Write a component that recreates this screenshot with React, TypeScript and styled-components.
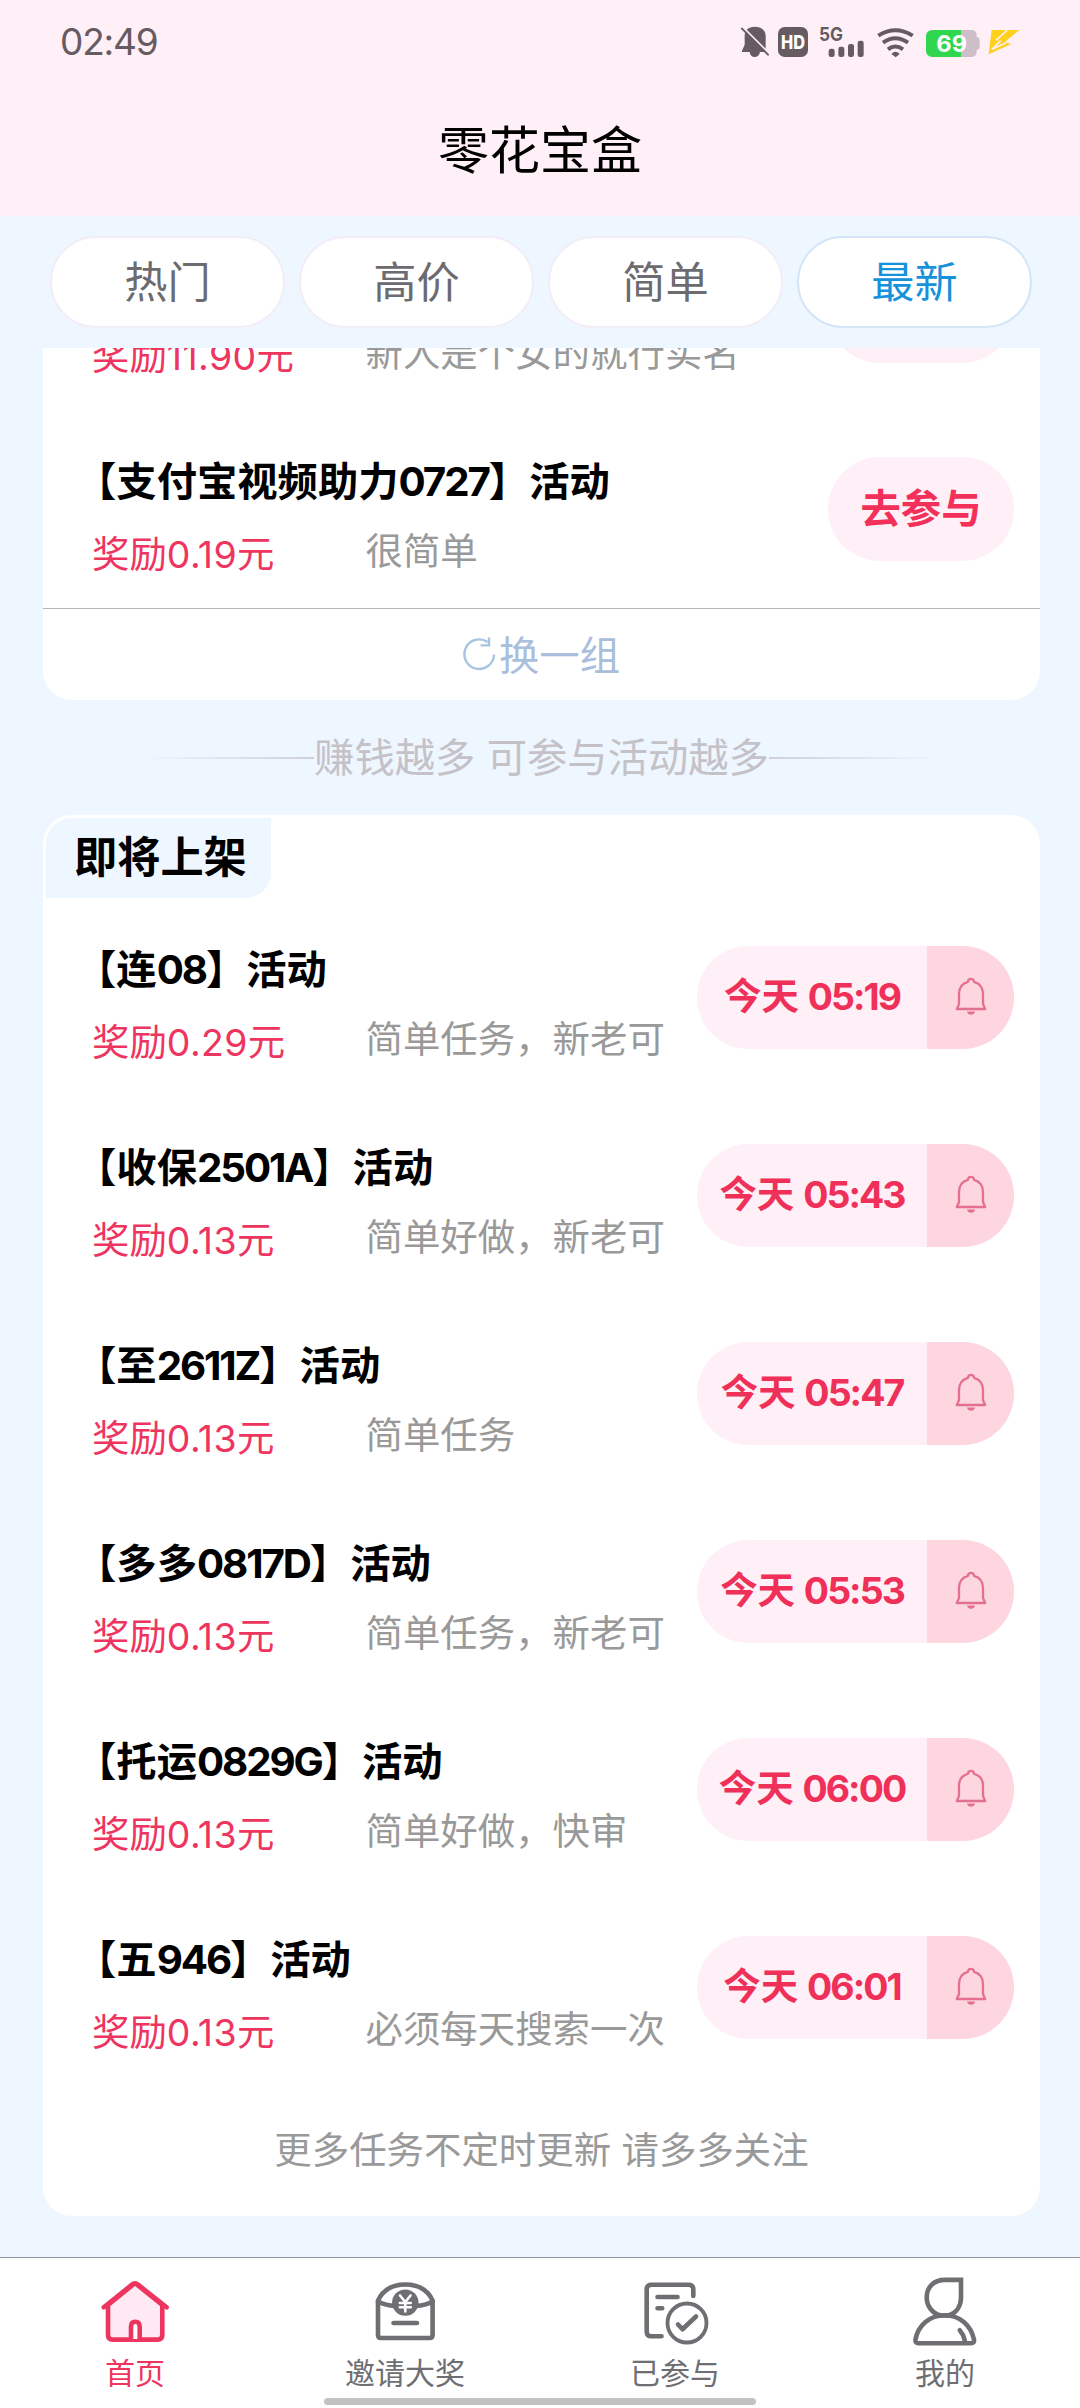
import React from "react";
import styled, { createGlobalStyle } from "styled-components";

const GlobalStyle = createGlobalStyle`
  * { box-sizing: border-box; }
  body {
    margin: 0;
    background: #eef6ff;
    font-family: Inter, "Noto Sans CJK SC", sans-serif;
  }
`;

const Screen = styled.div`
  width: 1080px;
  height: 2408px;
  display: flex;
  flex-direction: column;
  overflow: hidden;
  background: #eef6ff;
`;

const Header = styled.header`
  height: 216px;
  background: #ffeff6;
`;

const StatusBar = styled.div`
  height: 84px;
  padding: 0 60px 0 60px;
  display: flex;
  align-items: center;
  justify-content: space-between;
`;

const Clock = styled.span`
  font-size: 37px;
  line-height: 44px;
  letter-spacing: -1.2px;
  color: #665b61;
`;

const StatusIcons = styled.div`
  display: flex;
  align-items: center;
`;

const StatusIcon = styled.svg<{ $w: number; $gap?: number }>`
  display: block;
  width: ${(p) => p.$w}px;
  height: 32px;
  margin-left: ${(p) => p.$gap ?? 0}px;
  overflow: visible;
`;

const PageTitle = styled.h1`
  margin: 0;
  height: 132px;
  line-height: 134px;
  text-align: center;
  font-size: 51px;
  font-weight: 400;
  color: #000;
`;

const Tabs = styled.nav`
  height: 132px;
  padding: 20px 48px 0 50px;
  display: flex;
  gap: 14px;
`;

const Tab = styled.button<{ $active?: boolean }>`
  flex: 1;
  height: 92px;
  padding: 0 0 6px;
  border: 2px solid ${(p) => (p.$active ? "#d5e5f8" : "#f3edf7")};
  border-radius: 46px;
  background: #fff;
  font: 400 43.2px/70px "Noto Sans CJK SC", sans-serif;
  color: ${(p) => (p.$active ? "#1691dc" : "#6b6b70")};
`;

const Scroller = styled.main`
  height: 1909px;
  overflow: hidden;
  padding: 0 40px 0 43px;
`;

const ScrolledCard = styled.section`
  margin-top: -136px;
  height: 488px;
  background: #fff;
  border-radius: 0 0 29px 29px;
`;

const Refresh = styled.button`
  width: 100%;
  height: 92px;
  padding: 0 0 4px;
  border: 0;
  border-top: 1px solid #b3b7b9;
  background: transparent;
  display: flex;
  align-items: center;
  justify-content: center;
  gap: 3px;
  font: 400 40.32px/60px "Noto Sans CJK SC", sans-serif;
  color: #a9bedb;
`;

const Slogan = styled.div`
  height: 115px;
  display: flex;
  align-items: center;
  justify-content: center;
  font-size: 40.32px;
  line-height: 60px;
  color: #c4c1c7;
`;

const Fade = styled.i<{ $to: "left" | "right" }>`
  width: 170px;
  height: 2px;
  background: linear-gradient(to ${(p) => p.$to}, #cfd0d8, rgba(207, 208, 216, 0));
`;

const UpcomingCard = styled.section`
  height: 1401px;
  background: #fff;
  border: 3px solid #fff;
  border-bottom: 0;
  border-radius: 29px;
`;

const CardTag = styled.h2`
  margin: 0;
  width: 225px;
  height: 80px;
  padding-left: 28px;
  border-radius: 26px 0 26px 0;
  background: #eef6ff;
  font: 700 43.2px/72px "Noto Sans CJK SC", sans-serif;
  color: #000;
`;

const Row = styled.article<{ $inset?: number }>`
  height: 198px;
  padding: 0 ${(p) => 26 - (p.$inset ?? 0)}px 0 ${(p) => 33 - (p.$inset ?? 0)}px;
  display: flex;
  justify-content: space-between;
  align-items: center;
`;

const Info = styled.div`
  height: 198px;
  padding-top: 46px;
  white-space: nowrap;
`;

const Name = styled.h3`
  margin: 0;
  height: 52px;
  font-size: 40.32px;
  line-height: 52px;
  font-weight: 700;
  color: #000;
`;

const Meta = styled.div`
  margin-top: 21px;
  padding-left: 16px;
  display: flex;
  font-size: 37.44px;
  line-height: 52px;
`;

const Reward = styled.span`
  width: 273.5px;
  color: #ee3560;
`;

const Note = styled.span`
  margin-top: -3px;
  color: #999;
`;

const Digits = styled.span<{ $spacing: number }>`
  letter-spacing: ${(p) => p.$spacing}em;
`;

const JoinButton = styled.button`
  width: 186px;
  height: 104px;
  padding: 0 0 7px;
  border: 0;
  border-radius: 52px;
  background: #ffeff6;
  font: 700 40.32px/60px "Noto Sans CJK SC", sans-serif;
  color: #f2305a;
`;

const RemindButton = styled.button`
  width: 317px;
  height: 103px;
  padding: 0;
  border: 0;
  border-radius: 52px;
  overflow: hidden;
  display: flex;
  background: #ffeff6;
  font-family: inherit;
`;

const Time = styled.span`
  flex: 1;
  text-align: center;
  font-size: 37.44px;
  line-height: 101px;
  font-weight: 700;
  color: #ef3059;
`;

const BellBox = styled.span`
  width: 87px;
  height: 103px;
  display: flex;
  align-items: center;
  justify-content: center;
  background: #fdd6df;
`;

const MoreHint = styled.p`
  margin: 0;
  height: 130px;
  text-align: center;
  font-size: 37.44px;
  line-height: 130px;
  color: #999;
`;

const BottomNav = styled.footer`
  height: 151px;
  border-top: 1px solid #92969b;
  background: #fff;
  display: flex;
  flex-direction: column;
  align-items: center;
`;

const NavItems = styled.div`
  width: 100%;
  height: 140px;
  padding-top: 17px;
  display: flex;
`;

const NavItem = styled.div<{ $active?: boolean }>`
  flex: 1;
  display: flex;
  flex-direction: column;
  align-items: center;
  font: 400 30px/44px "Noto Sans CJK SC", sans-serif;
  color: ${(p) => (p.$active ? "#ee3560" : "#6e6e73")};
`;

const NavIcon = styled.svg`
  display: block;
  width: 72px;
  height: 72px;
  margin-bottom: 2px;
  fill: none;
  stroke: currentColor;
  stroke-width: 4.6;
  stroke-linecap: round;
  stroke-linejoin: round;
`;

const HomeIndicator = styled.div`
  width: 432px;
  height: 7px;
  border-radius: 4px;
  background: #c2c2c2;
`;

function Mixed({ text, bold }: { text: string; bold?: boolean }) {
  return (
    <>
      {text.split(/([0-9A-Z.:]+)/).map((part, i) =>
        i % 2 ? (
          <Digits key={i} $spacing={bold ? -0.052 : 0.01}>
            {part}
          </Digits>
        ) : (
          part
        )
      )}
    </>
  );
}

function BellIcon() {
  return (
    <svg width="32" height="40" viewBox="0 0 32 40" fill="none" stroke="#e4708f" strokeWidth="2.3" strokeLinejoin="round">
      <path d="M13 4.800a3 3 0 0 1 6 0C25 6.400 28 10.600 28 17V27L30.200 32H1.800L4 27V17C4 10.600 7 6.400 13 4.800Z" />
      <path d="M12 34.600h8c-.4 2.200-1.900 3.200-4 3.200s-3.600-1-4-3.200Z" fill="#e4708f" stroke="none" />
    </svg>
  );
}

function RefreshIcon() {
  return (
    <svg width="33" height="36" viewBox="0 0 33 36" fill="none" stroke="#a9c4e2" strokeWidth="2.4">
      <path d="M31 19.5A14.8 14.8 0 1 1 24.6 7" />
      <path d="M26 2.4V10.4H17.6" />
    </svg>
  );
}

const joinable = [
  { name: "", reward: "奖励11.90元", note: "新人是个女的就行实名", action: "" },
  { name: "【支付宝视频助力0727】活动", reward: "奖励0.19元", note: "很简单", action: "去参与" },
];

const upcoming = [
  { name: "【连08】活动", reward: "奖励0.29元", note: "简单任务，新老可", time: "今天 05:19" },
  { name: "【收保2501A】活动", reward: "奖励0.13元", note: "简单好做，新老可", time: "今天 05:43" },
  { name: "【至2611Z】活动", reward: "奖励0.13元", note: "简单任务", time: "今天 05:47" },
  { name: "【多多0817D】活动", reward: "奖励0.13元", note: "简单任务，新老可", time: "今天 05:53" },
  { name: "【托运0829G】活动", reward: "奖励0.13元", note: "简单好做，快审", time: "今天 06:00" },
  { name: "【五946】活动", reward: "奖励0.13元", note: "必须每天搜索一次", time: "今天 06:01" },
];

function TaskInfo({ name, reward, note }: { name: string; reward: string; note: string }) {
  return (
    <Info>
      <Name><Mixed text={name} bold /></Name>
      <Meta>
        <Reward><Mixed text={reward} /></Reward>
        <Note>{note}</Note>
      </Meta>
    </Info>
  );
}

function StatusIconRow() {
  const ink = "#665b61";
  return (
    <StatusIcons>
      <StatusIcon $w={28} viewBox="131 78 84 96">
        <path d="M172 80C152 80 142 91 142 108V134L134 152V156H157C158 166 164 171 172 171S186 166 188 156H205V108C205 91 192 80 172 80Z" fill={ink} />
        <path d="M138 83 216 161" stroke="#ffeff6" strokeWidth="6" />
        <path d="M134 86 212 164" stroke={ink} strokeWidth="6" strokeLinecap="round" />
      </StatusIcon>
      <StatusIcon $w={30} $gap={8.3} viewBox="240 78 90 96">
        <rect x="240" y="81" width="90" height="90" rx="20" fill={ink} />
        <text x="249" y="147" fontFamily="Inter" fontWeight="800" fontSize="56" textLength="72" lengthAdjust="spacingAndGlyphs" fill="#fff">HD</text>
      </StatusIcon>
      <StatusIcon $w={45} $gap={11.5} viewBox="364 78 135 96">
        <text x="364" y="124" fontFamily="Inter" fontWeight="700" fontSize="56" textLength="72" lengthAdjust="spacingAndGlyphs" fill={ink}>5G</text>
        <g fill={ink}>
          <rect x="393" y="146" width="18" height="25" rx="7" />
          <rect x="422" y="140" width="18" height="31" rx="7" />
          <rect x="451" y="132" width="18" height="39" rx="7" />
          <rect x="480" y="122" width="18" height="49" rx="7" />
        </g>
      </StatusIcon>
      <StatusIcon $w={37} $gap={12.7} viewBox="536 78 111 96">
        <g fill="none" stroke={ink} strokeWidth="12">
          <path d="M540 107Q591 75 643 107" />
          <path d="M554 128Q591 102 629 128" />
          <path d="M569 148Q591 131 614 148" />
        </g>
        <path d="M579 162Q591 148 604 162L592 172Z" fill={ink} />
      </StatusIcon>
      <StatusIcon $w={54} $gap={11.7} viewBox="682 78 162 96">
        <path d="M788 90H816Q834 90 834 106V112H837Q843 112 843 120V142Q843 149 837 149H834V155Q834 171 816 171H788Z" fill="#cdbec7" />
        <path d="M788 90H702Q682 90 682 110V151Q682 171 702 171H788Z" fill="#2fd64e" />
        <text x="713" y="157" fontFamily="Inter" fontWeight="700" fontSize="70" textLength="92" lengthAdjust="spacingAndGlyphs" fill="#fff">69</text>
      </StatusIcon>
      <StatusIcon $w={32} $gap={8.5} viewBox="868 78 96 96">
        <path d="M879 90H962L918 127L938 132L870 163Z" fill="#ffd01c" />
        <path d="M926 90 892 121M906 122 880 148M922 128 884 146" stroke="#ffeff6" strokeWidth="5" fill="none" />
      </StatusIcon>
    </StatusIcons>
  );
}

export default function App() {
  return (
    <Screen>
      <GlobalStyle />
      <Header>
        <StatusBar>
          <Clock>02:49</Clock>
          <StatusIconRow />
        </StatusBar>
        <PageTitle>零花宝盒</PageTitle>
      </Header>
      <Tabs>
        <Tab>热门</Tab>
        <Tab>高价</Tab>
        <Tab>简单</Tab>
        <Tab $active>最新</Tab>
      </Tabs>
      <Scroller>
        <ScrolledCard>
          {joinable.map(({ action, ...task }) => (
            <Row key={task.reward}>
              <TaskInfo {...task} />
              <JoinButton>{action}</JoinButton>
            </Row>
          ))}
          <Refresh>
            <RefreshIcon />
            换一组
          </Refresh>
        </ScrolledCard>
        <Slogan>
          <Fade $to="left" />
          赚钱越多 可参与活动越多
          <Fade $to="right" />
        </Slogan>
        <UpcomingCard>
          <CardTag>即将上架</CardTag>
          {upcoming.map(({ time, ...task }) => (
            <Row key={task.name} $inset={3}>
              <TaskInfo {...task} />
              <RemindButton>
                <Time><Mixed text={time} bold /></Time>
                <BellBox><BellIcon /></BellBox>
              </RemindButton>
            </Row>
          ))}
          <MoreHint>更多任务不定时更新 请多多关注</MoreHint>
        </UpcomingCard>
      </Scroller>
      <BottomNav>
        <NavItems>
          <NavItem $active>
            <NavIcon viewBox="0 0 72 72">
              <path d="M9 30 33.6 10Q36 7.4 38.4 10L63.3 30V60Q63.3 64.6 58.5 64.6H13.8Q9 64.6 9 60Z" fill="#ffeaf3" />
              <path d="M4.8 32.3 33 9.600Q36 7.2 39 9.6L67.6 32.3" />
              <path d="M32 64V51.5Q32 46.8 36.3 46.8T40.7 51.5V64" fill="#fff" />
            </NavIcon>
            首页
          </NavItem>
          <NavItem>
            <NavIcon viewBox="0 0 72 72">
              <path d="M9 25.5C14 15 24 9.5 36.3 9.5S58.7 15 63.6 25.5V60Q63.6 63 60.6 63H12Q9 63 9 60Z" />
              <path d="M9 26.5Q17 30.5 26 31M63.6 26.5Q56 30.5 47 31M24.5 48H48" />
              <circle cx="36.3" cy="27.6" r="13.2" fill="currentColor" stroke="none" />
              <path d="M31 20.5 36.3 27 41.500 20.5M36.3 27V36.5M30.8 28H41.800M30.8 32.2H41.8" stroke="#fff" strokeWidth="2.6" />
            </NavIcon>
            邀请大奖
          </NavItem>
          <NavItem>
            <NavIcon viewBox="0 0 72 72">
              <path d="M54.3 21V14.5Q54.3 9.7 49.5 9.7H12.5Q7.7 9.7 7.7 14.5V56.5Q7.7 61.3 12.5 61.3H22.5M18.5 22H38.5M18.5 33.2H23.2" />
              <circle cx="48" cy="48" r="19.5" strokeWidth="3.8" />
              <path d="M39 49.5 43.5 54.2 57 41.5" />
            </NavIcon>
            已参与
          </NavItem>
          <NavItem>
            <NavIcon viewBox="0 0 72 72">
              <path d="M52 4.900H36C24 4.9 17.7 13 17.7 22.5 17.7 31 23 38 31.5 40.5H39.5C47.500 38 52 31 52 22.5Z" strokeLinejoin="miter" />
              <path d="M35.7 40.3C20 40.3 9 51 6.5 64.5Q6 68.3 9.5 68.3H62Q65.6 68.3 65 64.5C62 51 51.5 40.3 35.7 40.3ZM50.8 55.3Q54.5 59.5 55.8 65.5" />
            </NavIcon>
            我的
          </NavItem>
        </NavItems>
        <HomeIndicator />
      </BottomNav>
    </Screen>
  );
}
